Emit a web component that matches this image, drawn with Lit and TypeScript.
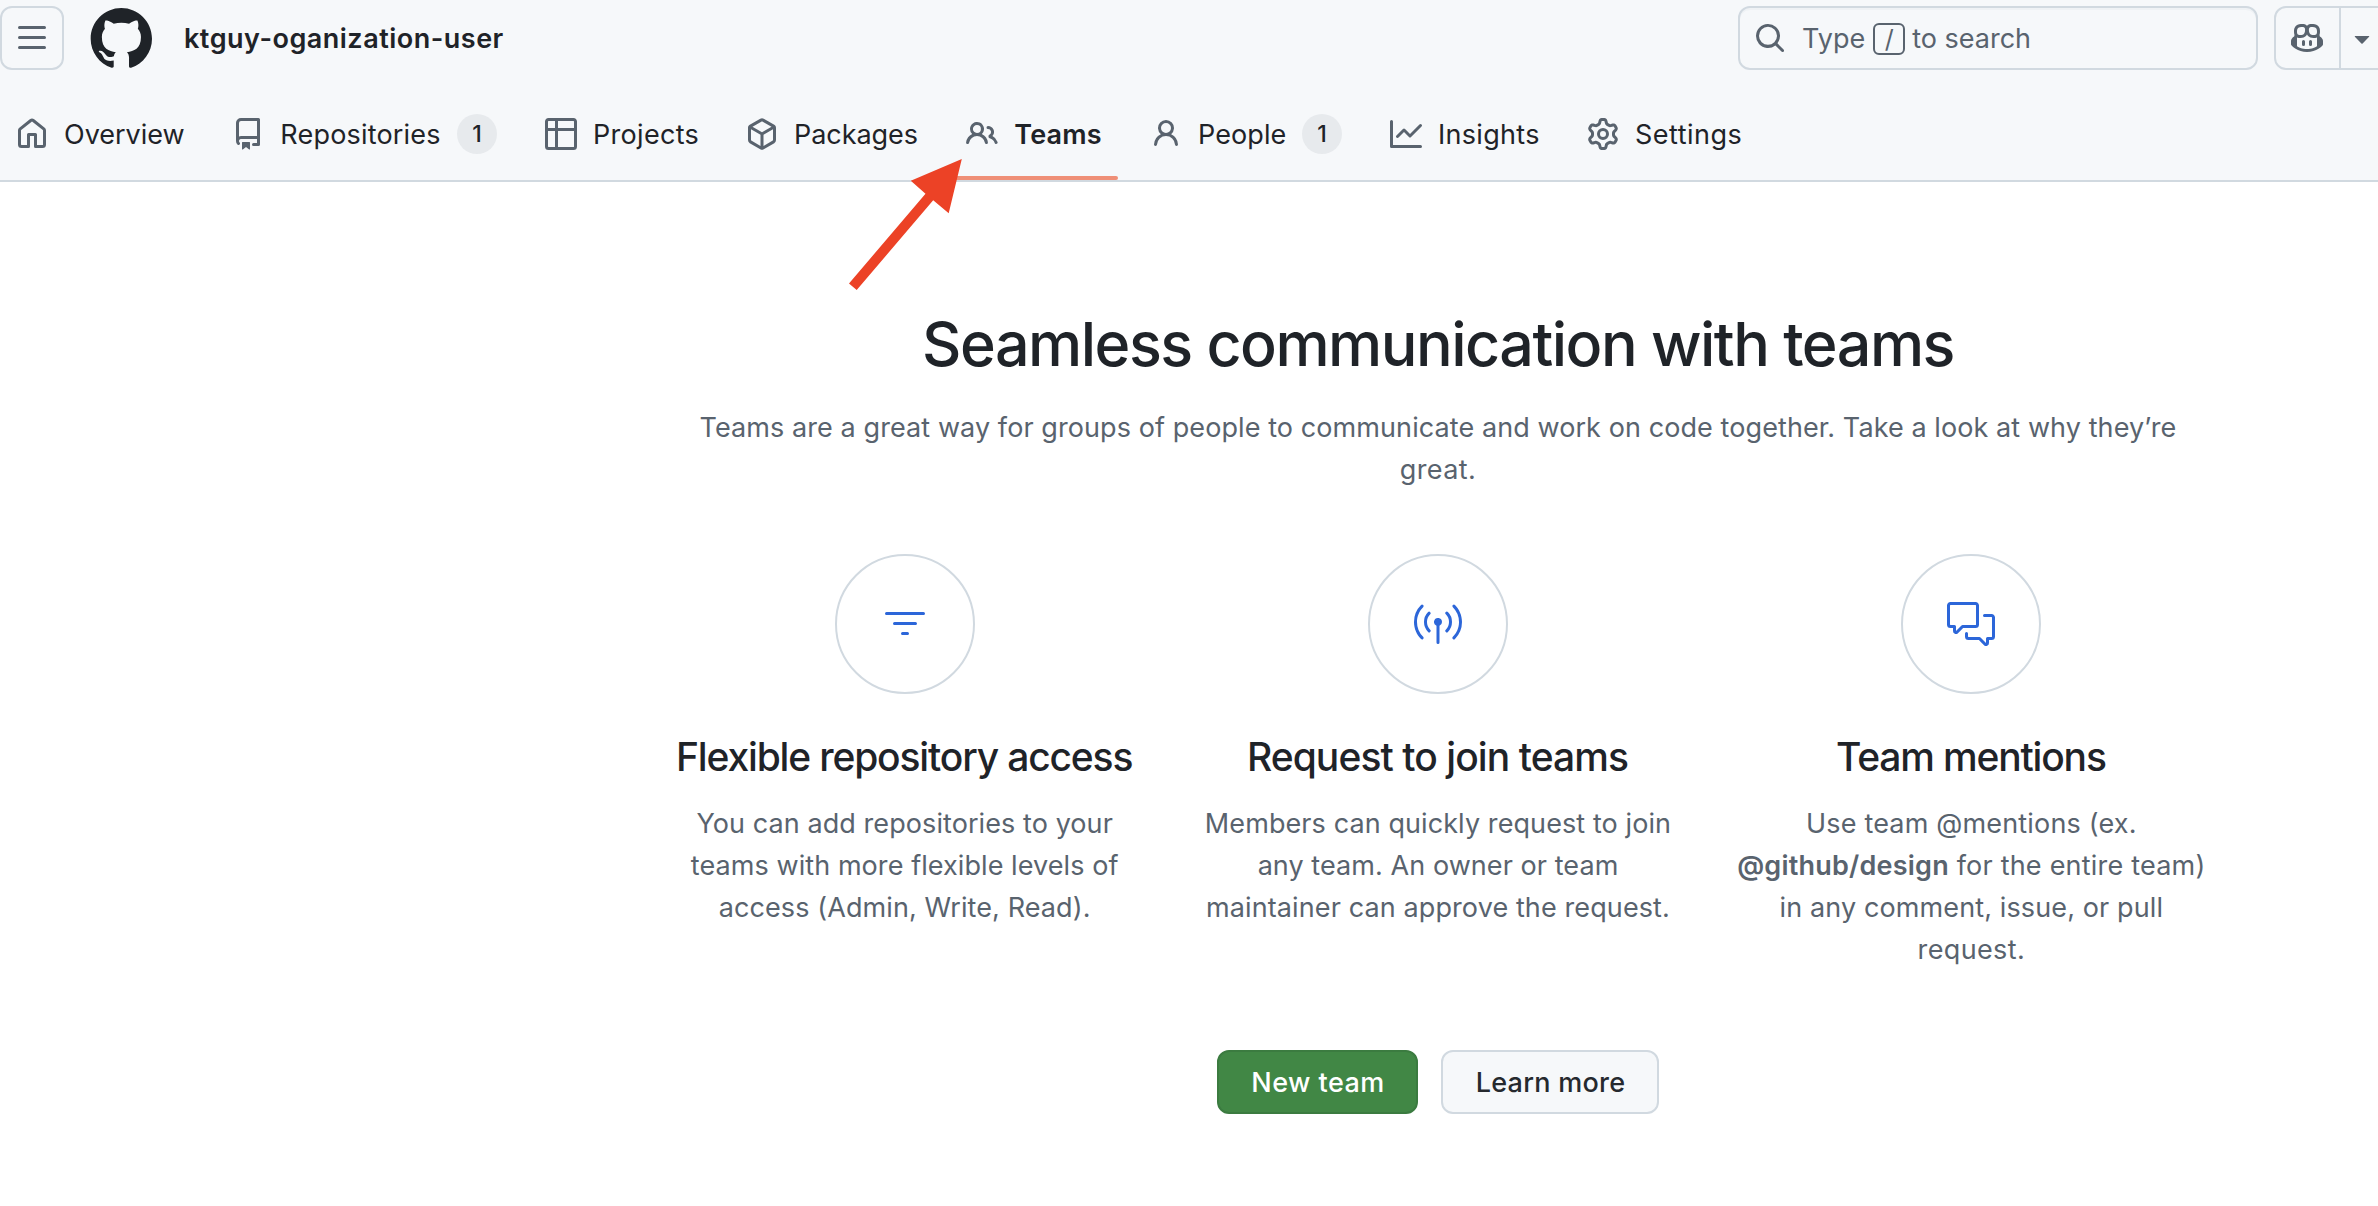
import { LitElement, html, css, svg, nothing, type TemplateResult } from "lit";

const paths: Record<string, string[]> = {
  menu: ["M1 2.75A.75.75 0 0 1 1.75 2h12.5a.75.75 0 0 1 0 1.5H1.75A.75.75 0 0 1 1 2.75Zm0 5A.75.75 0 0 1 1.75 7h12.5a.75.75 0 0 1 0 1.5H1.75A.75.75 0 0 1 1 7.75ZM1.75 12h12.5a.75.75 0 0 1 0 1.5H1.75a.75.75 0 0 1 0-1.5Z"],
  home: ["M6.906.664a1.749 1.749 0 0 1 2.187 0l5.25 4.2c.415.332.657.835.657 1.367v7.019A1.75 1.75 0 0 1 13.25 15h-3.5a.75.75 0 0 1-.75-.75V9H7v5.25a.75.75 0 0 1-.75.75h-3.5A1.75 1.75 0 0 1 1 13.25V6.23c0-.531.242-1.034.657-1.366l5.25-4.2Zm1.25 1.171a.25.25 0 0 0-.312 0l-5.25 4.2a.25.25 0 0 0-.094.196v7.019c0 .138.112.25.25.25H5.5V8.25a.75.75 0 0 1 .75-.75h3.5a.75.75 0 0 1 .75.75v5.25h2.75a.25.25 0 0 0 .25-.25V6.23a.25.25 0 0 0-.094-.195Z"],
  repo: ["M2 2.5A2.5 2.5 0 0 1 4.5 0h8.75a.75.75 0 0 1 .75.75v12.5a.75.75 0 0 1-.75.75h-2.5a.75.75 0 0 1 0-1.5h1.75v-2h-8a1 1 0 0 0-.714 1.7.75.75 0 1 1-1.072 1.05A2.495 2.495 0 0 1 2 11.5Zm10.5-1h-8a1 1 0 0 0-1 1v6.708A2.486 2.486 0 0 1 4.5 9h8ZM5 12.25a.25.25 0 0 1 .25-.25h3.5a.25.25 0 0 1 .25.25v3.25a.25.25 0 0 1-.4.2l-1.45-1.087a.249.249 0 0 0-.3 0L5.4 15.7a.25.25 0 0 1-.4-.2Z"],
  table: ["M0 1.75C0 .784.784 0 1.75 0h12.5C15.216 0 16 .784 16 1.75v12.5A1.75 1.75 0 0 1 14.25 16H1.75A1.75 1.75 0 0 1 0 14.25ZM6.5 6.5v8h7.75a.25.25 0 0 0 .25-.25V6.5Zm8-1.5V1.75a.25.25 0 0 0-.25-.25H6.5V5Zm-13 1.5v7.75c0 .138.112.25.25.25H5v-8ZM5 5V1.5H1.75a.25.25 0 0 0-.25.25V5Z"],
  package: ["m8.878.392 5.25 3.045c.54.314.872.89.872 1.514v6.098a1.75 1.75 0 0 1-.872 1.514l-5.25 3.045a1.75 1.75 0 0 1-1.756 0l-5.25-3.045A1.75 1.75 0 0 1 1 11.049V4.951c0-.624.332-1.201.872-1.514L7.122.392a1.75 1.75 0 0 1 1.756 0ZM7.875 1.69l-4.63 2.685L8 7.133l4.755-2.758-4.63-2.685a.248.248 0 0 0-.25 0ZM2.5 5.677v5.372c0 .09.047.171.125.216l4.625 2.683V8.432Zm6.25 8.271 4.625-2.683a.25.25 0 0 0 .125-.216V5.677L8.75 8.432Z"],
  people: ["M2 5.5a3.5 3.5 0 1 1 5.898 2.549 5.508 5.508 0 0 1 3.034 4.084.75.75 0 1 1-1.482.235 4 4 0 0 0-7.9 0 .75.75 0 0 1-1.482-.236A5.507 5.507 0 0 1 3.102 8.05 3.493 3.493 0 0 1 2 5.5ZM11 4a3.001 3.001 0 0 1 2.22 5.018 5.01 5.01 0 0 1 2.56 3.012.749.749 0 0 1-.885.954.752.752 0 0 1-.549-.514 3.507 3.507 0 0 0-2.522-2.372.75.75 0 0 1-.574-.73v-.352a.75.75 0 0 1 .416-.672A1.5 1.5 0 0 0 11 5.5.75.75 0 0 1 11 4Zm-5.5-.5a2 2 0 1 0-.001 3.999A2 2 0 0 0 5.5 3.5Z"],
  person: ["M10.561 8.073a6.005 6.005 0 0 1 3.432 5.142.75.75 0 1 1-1.498.07 4.5 4.5 0 0 0-8.99 0 .75.75 0 0 1-1.498-.07 6.004 6.004 0 0 1 3.431-5.142 3.999 3.999 0 1 1 5.123 0ZM10.5 5a2.5 2.5 0 1 0-5 0 2.5 2.5 0 0 0 5 0Z"],
  graph: ["M1.5 1.75V13.5h13.75a.75.75 0 0 1 0 1.5H.75a.75.75 0 0 1-.75-.75V1.75a.75.75 0 0 1 1.5 0Zm14.28 2.53-5.25 5.25a.75.75 0 0 1-1.06 0L7 7.06 4.28 9.78a.751.751 0 0 1-1.042-.018.751.751 0 0 1-.018-1.042l3.25-3.25a.75.75 0 0 1 1.06 0L10 7.94l4.72-4.72a.751.751 0 0 1 1.042.018.751.751 0 0 1 .018 1.042Z"],
  gear: ["M8 0a8.2 8.2 0 0 1 .701.031C9.444.095 9.99.645 10.16 1.29l.288 1.107c.018.066.079.158.212.224.231.114.454.243.668.386.123.082.233.09.299.071l1.103-.303c.644-.176 1.392.021 1.82.63.27.385.506.792.704 1.218.315.675.111 1.422-.364 1.891l-.814.806c-.049.048-.098.147-.088.294.016.257.016.515 0 .772-.01.147.038.246.088.294l.814.806c.475.469.679 1.216.364 1.891a7.977 7.977 0 0 1-.704 1.217c-.428.61-1.176.807-1.82.63l-1.102-.302c-.067-.019-.177-.011-.3.071a5.909 5.909 0 0 1-.668.386c-.133.066-.194.158-.211.224l-.29 1.106c-.168.646-.715 1.196-1.458 1.26a8.006 8.006 0 0 1-1.402 0c-.743-.064-1.289-.614-1.458-1.26l-.289-1.106c-.018-.066-.079-.158-.212-.224a5.738 5.738 0 0 1-.668-.386c-.123-.082-.233-.09-.299-.071l-1.103.303c-.644.176-1.392-.021-1.82-.63a8.12 8.12 0 0 1-.704-1.218c-.315-.675-.111-1.422.363-1.891l.815-.806c.05-.048.098-.147.088-.294a6.214 6.214 0 0 1 0-.772c.01-.147-.038-.246-.088-.294l-.815-.806C.635 6.045.431 5.298.746 4.623a7.92 7.92 0 0 1 .704-1.217c.428-.61 1.176-.807 1.82-.63l1.102.302c.067.019.177.011.3-.071.214-.143.437-.272.668-.386.133-.066.194-.158.211-.224l.29-1.106C6.009.645 6.556.095 7.299.03 7.53.01 7.764 0 8 0Zm-.571 1.525c-.036.003-.108.036-.137.146l-.289 1.105c-.147.561-.549.967-.998 1.189-.173.086-.34.183-.5.29-.417.278-.97.423-1.529.27l-1.103-.303c-.109-.03-.175.016-.195.045-.22.312-.412.644-.573.99-.014.031-.021.11.059.19l.815.806c.411.406.562.957.53 1.456a4.709 4.709 0 0 0 0 .582c.032.499-.119 1.05-.53 1.456l-.815.806c-.081.08-.073.159-.059.19.162.346.353.677.573.989.02.03.085.076.195.046l1.102-.303c.56-.153 1.113-.008 1.53.27.161.107.328.204.501.29.447.222.85.629.997 1.189l.289 1.105c.029.109.101.143.137.146a6.6 6.6 0 0 0 1.142 0c.036-.003.108-.036.137-.146l.289-1.105c.147-.561.549-.967.998-1.189.173-.086.34-.183.5-.29.417-.278.97-.423 1.529-.27l1.103.303c.109.029.175-.016.195-.045.22-.313.411-.644.573-.99.014-.031.021-.11-.059-.19l-.815-.806c-.411-.406-.562-.957-.53-1.456a4.709 4.709 0 0 0 0-.582c-.032-.499.119-1.05.53-1.456l.815-.806c.081-.08.073-.159.059-.19a6.464 6.464 0 0 0-.573-.989c-.02-.03-.085-.076-.195-.046l-1.102.303c-.56.153-1.113.008-1.53-.27a4.44 4.44 0 0 0-.501-.29c-.447-.222-.85-.629-.997-1.189l-.289-1.105c-.029-.11-.101-.143-.137-.146a6.6 6.6 0 0 0-1.142 0ZM11 8a3 3 0 1 1-6 0 3 3 0 0 1 6 0ZM9.5 8a1.5 1.5 0 1 0-3.001.001A1.5 1.5 0 0 0 9.5 8Z"],
  search: ["M10.68 11.74a6 6 0 0 1-7.922-8.982 6 6 0 0 1 8.982 7.922l3.04 3.04a.749.749 0 0 1-.326 1.275.749.749 0 0 1-.734-.215ZM11.5 7a4.499 4.499 0 1 0-8.997 0A4.499 4.499 0 0 0 11.5 7Z"],
  copilot: ["M7.998 15.035c-4.562 0-7.873-2.914-7.998-3.749V9.338c.085-.628.677-1.686 1.588-2.065.013-.07.024-.143.036-.218.029-.183.06-.384.126-.612-.201-.508-.254-1.084-.254-1.656 0-.87.128-1.769.693-2.484.579-.733 1.494-1.124 2.724-1.261 1.206-.134 2.262.034 2.944.765.05.053.096.108.139.165.044-.057.094-.112.143-.165.682-.731 1.738-.899 2.944-.765 1.23.137 2.145.528 2.724 1.261.566.715.693 1.614.693 2.484 0 .572-.053 1.148-.254 1.656.066.228.098.429.126.612.012.076.024.148.037.218.924.385 1.522 1.471 1.591 2.095v1.872c0 .766-3.351 3.795-8.002 3.795Zm0-1.485c2.28 0 4.584-1.11 5.002-1.433V7.862l-.023-.116c-.49.21-1.075.291-1.727.291-1.146 0-2.059-.327-2.71-.991A3.222 3.222 0 0 1 8 6.303a3.24 3.24 0 0 1-.544.743c-.65.664-1.563.991-2.71.991-.652 0-1.236-.081-1.727-.291l-.023.116v4.255c.419.323 2.722 1.433 5.002 1.433ZM6.762 2.83c-.193-.206-.637-.413-1.682-.297-1.019.113-1.479.404-1.713.7-.247.312-.369.789-.369 1.554 0 .793.129 1.171.308 1.371.162.181.519.379 1.442.379.853 0 1.339-.235 1.638-.54.315-.322.527-.827.617-1.553.117-.935-.037-1.395-.241-1.614Zm4.155-.297c-1.044-.116-1.488.091-1.681.297-.204.219-.359.679-.242 1.614.091.726.303 1.231.618 1.553.299.305.784.54 1.638.54.922 0 1.28-.198 1.442-.379.179-.2.308-.578.308-1.371 0-.765-.123-1.242-.37-1.554-.233-.296-.693-.587-1.713-.7Z", "M6.25 9.037a.75.75 0 0 1 .75.75v1.501a.75.75 0 0 1-1.5 0V9.787a.75.75 0 0 1 .75-.75Zm4.25.75v1.501a.75.75 0 0 1-1.5 0V9.787a.75.75 0 0 1 1.5 0Z"],
  caret: ["m4.427 7.427 3.396 3.396a.25.25 0 0 0 .354 0l3.396-3.396A.25.25 0 0 0 11.396 7H4.604a.25.25 0 0 0-.177.427Z"],
  mark: ["M12.5.75C6.146.75 1 5.896 1 12.25c0 5.089 3.292 9.387 7.863 10.91.575.101.79-.244.79-.546 0-.273-.014-1.178-.014-2.142-2.889.532-3.636-.704-3.866-1.35-.13-.331-.69-1.352-1.18-1.625-.402-.216-.977-.748-.014-.762.906-.014 1.553.834 1.769 1.179 1.035 1.74 2.688 1.25 3.349.948.1-.747.402-1.25.733-1.538-2.559-.287-5.232-1.279-5.232-5.678 0-1.25.445-2.285 1.178-3.09-.115-.288-.517-1.467.115-3.048 0 0 .963-.302 3.163 1.179.92-.259 1.897-.388 2.875-.388.977 0 1.955.13 2.875.388 2.2-1.495 3.162-1.179 3.162-1.179.633 1.581.23 2.76.115 3.048.733.805 1.179 1.825 1.179 3.09 0 4.413-2.688 5.39-5.247 5.678.417.36.776 1.05.776 2.128 0 1.538-.014 2.774-.014 3.162 0 .302.216.662.79.547C20.709 21.637 24 17.324 24 12.25 24 5.896 18.854.75 12.5.75Z"],
  filter: ["M2.75 6a.75.75 0 0 0 0 1.5h18.5a.75.75 0 0 0 0-1.5H2.75ZM6 11.75a.75.75 0 0 1 .75-.75h10.5a.75.75 0 0 1 0 1.5H6.75a.75.75 0 0 1-.75-.75Zm4 4.938a.75.75 0 0 1 .75-.75h2.5a.75.75 0 0 1 0 1.5h-2.5a.75.75 0 0 1-.75-.75Z"],
  broadcast: ["M20.485 2.515a.75.75 0 0 0-1.06 1.06A10.465 10.465 0 0 1 22.5 11c0 2.9-1.174 5.523-3.075 7.424a.75.75 0 0 0 1.06 1.061A11.965 11.965 0 0 0 24 11c0-3.314-1.344-6.315-3.515-8.485Zm-15.91 1.06a.75.75 0 0 0-1.06-1.06A11.965 11.965 0 0 0 0 11c0 3.313 1.344 6.314 3.515 8.485a.75.75 0 0 0 1.06-1.06A10.465 10.465 0 0 1 1.5 11c0-2.9 1.174-5.524 3.075-7.425ZM8.11 7.11a.75.75 0 0 0-1.06-1.06A6.98 6.98 0 0 0 5 11a6.98 6.98 0 0 0 2.05 4.95.75.75 0 0 0 1.06-1.061 5.48 5.48 0 0 1-1.61-3.89 5.48 5.48 0 0 1 1.61-3.888Zm8.84-1.06a.75.75 0 1 0-1.06 1.06A5.48 5.48 0 0 1 17.5 11a5.48 5.48 0 0 1-1.61 3.889.75.75 0 1 0 1.06 1.06A6.98 6.98 0 0 0 19 11a6.98 6.98 0 0 0-2.05-4.949ZM14 11a2 2 0 0 1-1.25 1.855v8.395a.75.75 0 0 1-1.5 0v-8.395A2 2 0 1 1 14 11Z"],
  discussion: ["M1.75 1h12.5c.966 0 1.75.784 1.75 1.75v9.5A1.75 1.75 0 0 1 14.25 14H8.061l-2.574 2.573A1.458 1.458 0 0 1 3 15.543V14H1.75A1.75 1.75 0 0 1 0 12.25v-9.5C0 1.784.784 1 1.75 1ZM1.5 2.75v9.5c0 .138.112.25.25.25h2a.75.75 0 0 1 .75.75v2.19l2.72-2.72a.749.749 0 0 1 .53-.22h6.5a.25.25 0 0 0 .25-.25v-9.5a.25.25 0 0 0-.25-.25H1.75a.25.25 0 0 0-.25.25Z", "M22.5 8.75a.25.25 0 0 0-.25-.25h-3.5a.75.75 0 0 1 0-1.5h3.5c.966 0 1.75.784 1.75 1.75v9.5A1.75 1.75 0 0 1 22.25 20H21v1.543a1.457 1.457 0 0 1-2.487 1.03L15.939 20H10.75A1.75 1.75 0 0 1 9 18.25v-1.465a.75.75 0 0 1 1.5 0v1.465c0 .138.112.25.25.25h5.5a.75.75 0 0 1 .53.22l2.72 2.72v-2.19a.75.75 0 0 1 .75-.75h2a.25.25 0 0 0 .25-.25v-9.5Z"],
};

const icon = (name: string, size = 32, grid = 16) => html`<svg
  class="icon" width=${size} height=${size} viewBox="0 0 ${grid} ${grid}" fill="currentColor" aria-hidden="true"
>${paths[name].map((d) => svg`<path d=${d}></path>`)}</svg>`;

interface Tab {
  icon: string;
  label: string;
  width: number;
  tracking: number;
  count?: number;
  active?: boolean;
}

const tabs: Tab[] = [
  { icon: "home", label: "Overview", width: 120, tracking: 0 },
  { icon: "repo", label: "Repositories", width: 161, tracking: 0.18, count: 1 },
  { icon: "table", label: "Projects", width: 105, tracking: 0.3 },
  { icon: "package", label: "Packages", width: 124, tracking: -0.06 },
  { icon: "people", label: "Teams", width: 88, tracking: 0.18, active: true },
  { icon: "person", label: "People", width: 88, tracking: 0.08, count: 1 },
  { icon: "graph", label: "Insights", width: 101, tracking: 0.3 },
  { icon: "gear", label: "Settings", width: 107, tracking: 0.48 },
];

interface Line {
  text: TemplateResult | string;
  tracking: number;
}

interface Feature {
  icon: string;
  title: string;
  tracking: number;
  lines: Line[];
}

const features: Feature[] = [
  {
    icon: "filter",
    title: "Flexible repository access",
    tracking: -1.16,
    lines: [
      { text: "You can add repositories to your", tracking: 0.08 },
      { text: "teams with more flexible levels of", tracking: 0.07 },
      { text: "access (Admin, Write, Read).", tracking: 0.093 },
    ],
  },
  {
    icon: "broadcast",
    title: "Request to join teams",
    tracking: -0.93,
    lines: [
      { text: "Members can quickly request to join", tracking: 0.09 },
      { text: "any team. An owner or team", tracking: 0.066 },
      { text: "maintainer can approve the request.", tracking: 0.108 },
    ],
  },
  {
    icon: "discussion",
    title: "Team mentions",
    tracking: -1.17,
    lines: [
      { text: "Use team @mentions (ex.", tracking: 0.17 },
      { text: html`<strong>@github/design</strong> for the entire team)`, tracking: 0.21 },
      { text: "in any comment, issue, or pull", tracking: 0.121 },
      { text: "request.", tracking: 0.36 },
    ],
  },
];

class AppRoot extends LitElement {
  static styles = css`
    :host {
      display: block;
      position: relative;
      height: 1206px;
      overflow: hidden;
      background: #fff;
      color: #1f2328;
      font: 400 27px/42px Inter, "Liberation Sans", sans-serif;
    }
    * { box-sizing: border-box; }
    .icon { display: block; flex: none; }
    .header {
      height: 182px;
      background: #f6f8fa;
      border-bottom: 2px solid #d1d9e0;
    }
    .topbar {
      display: flex;
      align-items: center;
      height: 88px;
      padding-bottom: 12px;
      overflow: hidden;
    }
    .box {
      display: flex;
      align-items: center;
      flex: none;
      height: 64px;
      border: 2px solid #d1d9e0;
      border-radius: 12px;
      color: #59636e;
    }
    .menu { width: 64px; justify-content: center; background: none; padding: 0; }
    .logo { margin-left: 24px; }
    .org {
      margin: 0 auto 0 32px;
      padding-top: 2px;
      font-weight: 600;
      letter-spacing: 0.5px;
      white-space: nowrap;
    }
    .search {
      width: 520px;
      padding-left: 14px;
      box-shadow: inset 0 2px 0 #eff2f5;
    }
    .hint { display: flex; align-items: center; margin-left: 16px; white-space: pre; }
    .word { padding-top: 2px; }
    .key {
      display: flex;
      align-items: center;
      justify-content: center;
      width: 32px;
      height: 32px;
      margin: 2px 7px 0 8px;
      border: 2px solid #59636e;
      border-radius: 6px;
      font-size: 25px;
      line-height: 24px;
    }
    .copilot { width: 122px; margin: 0 -18px 0 16px; }
    .assist {
      display: flex;
      align-items: center;
      width: 65px;
      height: 60px;
      padding-left: 15px;
      border-right: 2px solid #d1d9e0;
    }
    .more { padding-left: 5px; }
    .tabs { display: flex; height: 92px; gap: 16px; }
    .tab {
      position: relative;
      display: flex;
      align-items: center;
      gap: 16px;
      height: 92px;
      padding: 0 16px;
      white-space: nowrap;
    }
    .tab .icon { color: #59636e; }
    .label { padding-top: 2px; text-align: center; }
    .active .label { font-weight: 600; }
    .active::after {
      content: "";
      position: absolute;
      left: 0;
      right: 0;
      bottom: 0;
      height: 4px;
      border-radius: 2px;
      background: #ef8f77;
    }
    .count {
      display: flex;
      align-items: center;
      justify-content: center;
      width: 40px;
      height: 40px;
      border-radius: 20px;
      background: #e7eaed;
      font-size: 23px;
      font-weight: 500;
    }
    .main { width: 1600px; margin-left: 638px; padding-top: 122px; text-align: center; }
    .title {
      margin: 0 0 23px;
      font-size: 61px;
      line-height: 80px;
      font-weight: 500;
      letter-spacing: -1.5px;
      white-space: nowrap;
    }
    .intro { margin: 0; color: #59636e; }
    .line { display: block; white-space: nowrap; }
    .lead { letter-spacing: 0.083px; }
    .tail { letter-spacing: 0.4px; }
    .features {
      display: grid;
      grid-template-columns: repeat(3, 1fr);
      height: 495px;
      padding-top: 63px;
    }
    .feature { display: flex; flex-direction: column; align-items: center; }
    .disc {
      display: flex;
      align-items: center;
      justify-content: center;
      width: 140px;
      height: 140px;
      border: 2px solid #d1d9e0;
      border-radius: 50%;
      color: #2c66d9;
    }
    .name {
      margin: 33px 0 16px;
      padding-right: 1px;
      font-size: 39px;
      line-height: 60px;
      font-weight: 500;
      white-space: nowrap;
    }
    .copy { margin: 0; color: #59636e; }
    .copy strong { font-weight: 600; }
    .actions { display: flex; justify-content: center; gap: 23px; padding-top: 64px; }
    .btn {
      height: 64px;
      padding: 2px 0 0 1px;
      border: 2px solid #d1d9e0;
      border-radius: 12px;
      background: #f6f8fa;
      color: #25292e;
      font: 500 27px/42px Inter, "Liberation Sans", sans-serif;
    }
    .primary {
      width: 201px;
      background: #418745;
      border-color: #3b7b40;
      color: #fff;
      letter-spacing: 0.45px;
    }
    .secondary { width: 218px; letter-spacing: 0.25px; }
    .arrow { position: absolute; left: 840px; top: 150px; }
  `;

  render() {
    return html`
      <header class="header">
        <div class="topbar">
          <button class="box menu" aria-label="Open menu">${icon("menu")}</button>
          <div class="logo">${icon("mark", 64, 24)}</div>
          <span class="org">ktguy-oganization-user</span>
          <div class="box search">
            ${icon("search")}
            <div class="hint"><span class="word">Type</span><span class="key">/</span><span class="word">to search</span></div>
          </div>
          <div class="box copilot">
            <div class="assist">${icon("copilot")}</div>
            <div class="more">${icon("caret")}</div>
          </div>
        </div>
        <nav class="tabs">
          ${tabs.map((t) => html`
            <a class="tab ${t.active ? "active" : ""}">
              ${icon(t.icon)}
              <span class="label" style="width:${t.width}px;letter-spacing:${t.tracking}px">${t.label}</span>
              ${t.count ? html`<span class="count">${t.count}</span>` : nothing}
            </a>`)}
        </nav>
      </header>
      <main class="main">
        <h1 class="title">Seamless communication with teams</h1>
        <p class="intro">
          <span class="line lead">Teams are a great way for groups of people to communicate and work on code together. Take a look at why they’re</span>
          <span class="line tail">great.</span>
        </p>
        <section class="features">
          ${features.map((f) => html`
            <article class="feature">
              <div class="disc">${icon(f.icon, 48, 24)}</div>
              <h3 class="name" style="letter-spacing:${f.tracking}px">${f.title}</h3>
              <p class="copy">
                ${f.lines.map((l) => html`<span class="line" style="letter-spacing:${l.tracking}px">${l.text}</span>`)}
              </p>
            </article>`)}
        </section>
        <div class="actions">
          <button class="btn primary">New team</button>
          <button class="btn secondary">Learn more</button>
        </div>
      </main>
      <svg class="arrow" width="140" height="150" viewBox="840 150 140 150" aria-hidden="true">
        <path fill="#ec4226" d="M961.8 159 910.8 180.7 925.5 193.7 849 283.5 856.7 290 933.2 200.3 948.7 213.3Z"></path>
      </svg>
    `;
  }
}
customElements.define("app-root", AppRoot);
